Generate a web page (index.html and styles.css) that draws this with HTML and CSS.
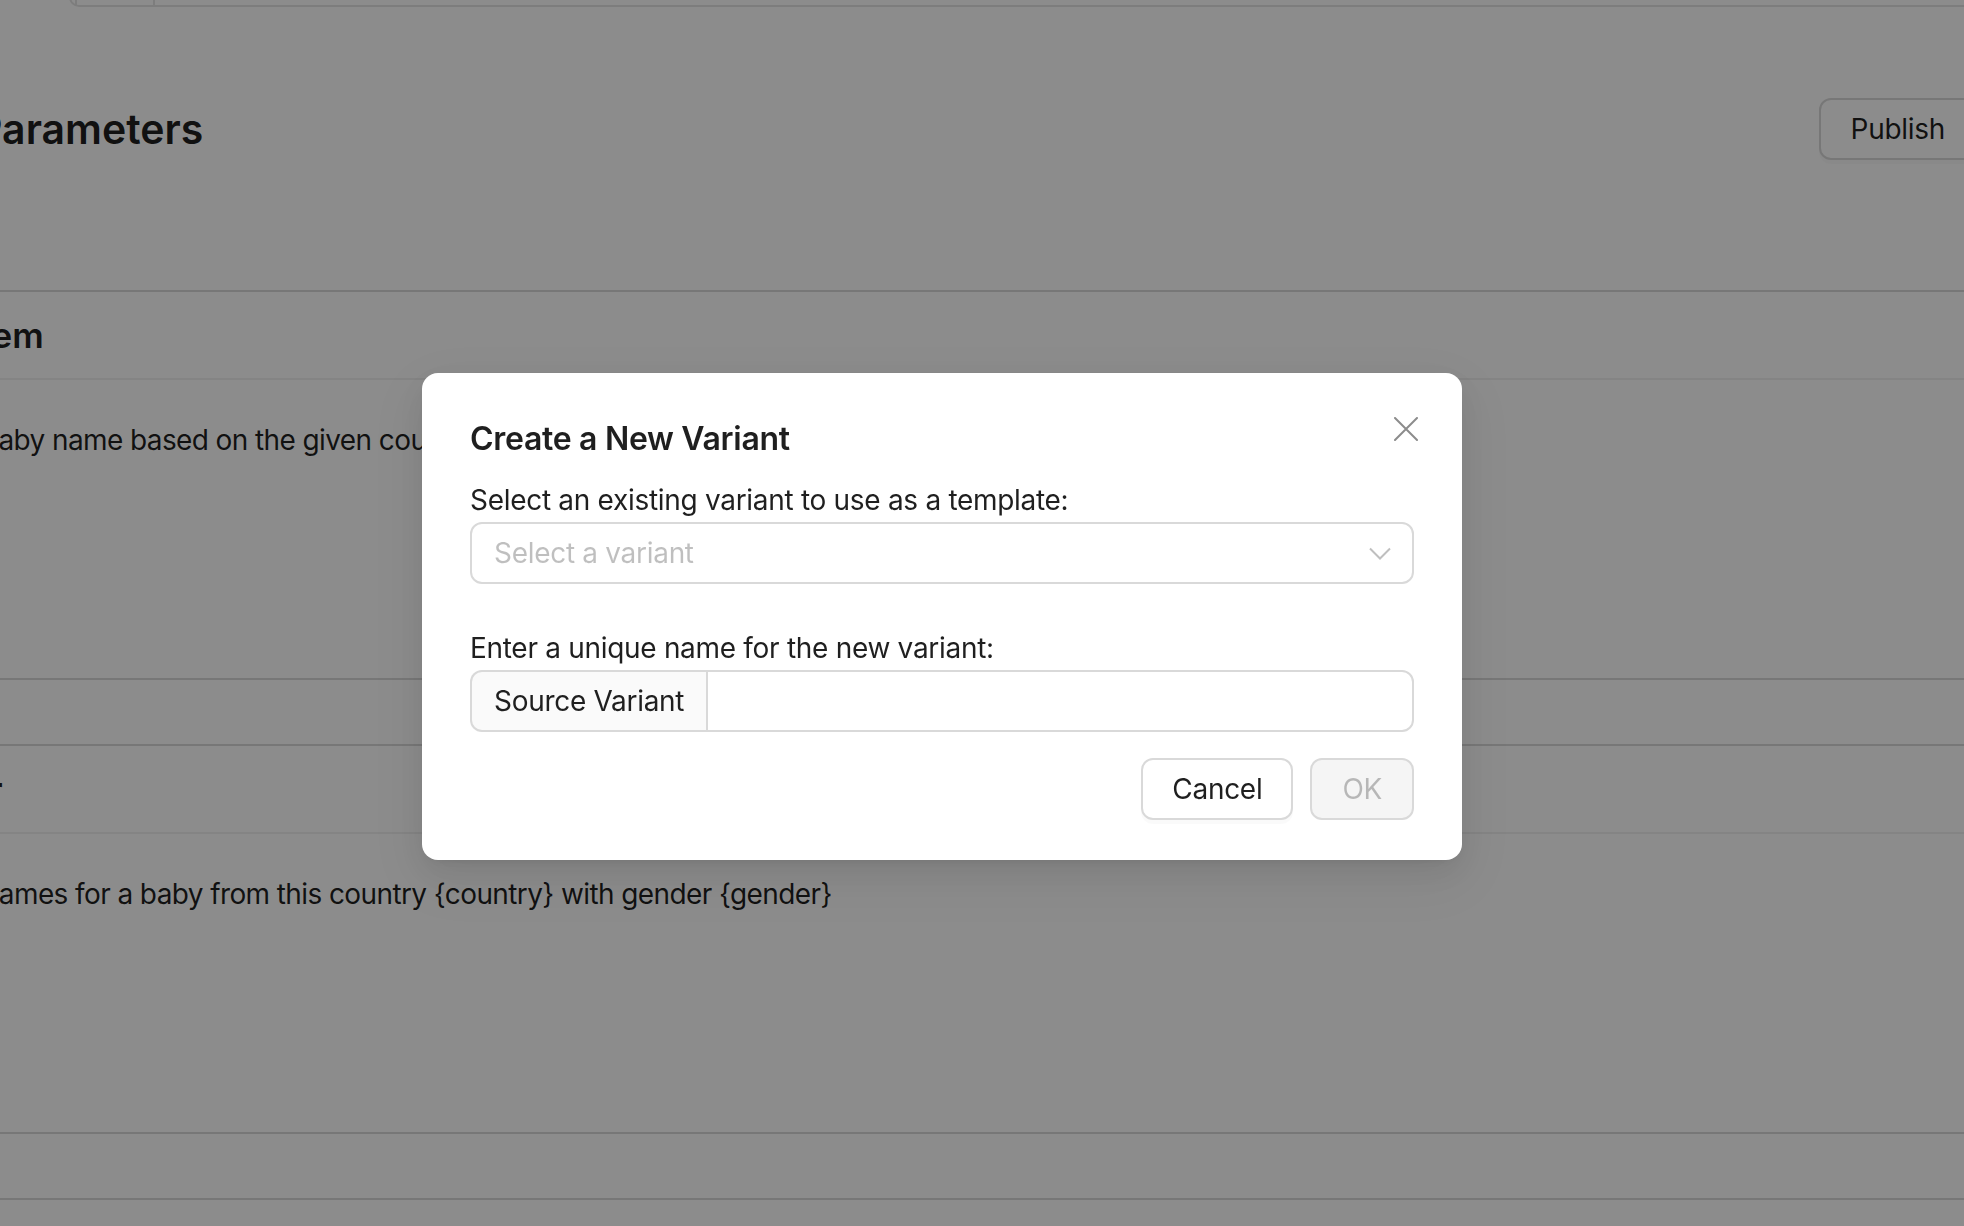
FILE: index.html
```html
<!DOCTYPE html>
<html lang="en">
<head>
<meta charset="utf-8">
<title>Parameters</title>
<link rel="stylesheet" href="styles.css">
</head>
<body>
<div class="page">
  <div class="topbar"><div class="topbar-seg"></div></div>

  <div class="page-head">
    <h2 class="page-title">Parameters</h2>
    <button class="btn btn-publish" type="button">Publish</button>
  </div>

  <div class="cards">
    <section class="card">
      <div class="card-head"><span class="card-title">System</span></div>
      <div class="card-body"><p class="prompt prompt-system">Suggest a baby name based on the given country and gender.</p></div>
    </section>
    <section class="card">
      <div class="card-head"><span class="card-title card-title-user">User</span></div>
      <div class="card-body"><p class="prompt prompt-user">Suggest 5 names for a baby from this country {country} with gender {gender}</p></div>
    </section>
    <section class="card">
      <div class="card-head"></div>
      <div class="card-body"></div>
    </section>
  </div>
</div>

<div class="mask"></div>

<div class="modal" role="dialog" aria-labelledby="modal-title">
  <button class="modal-close" type="button" aria-label="Close">
    <svg width="24" height="24" viewBox="0 0 24 24"><path d="M1 1 L23 23 M23 1 L1 23" stroke="#8c8c8c" stroke-width="2" fill="none" stroke-linecap="round"/></svg>
  </button>
  <div class="modal-title" id="modal-title">Create a New Variant</div>
  <div class="modal-body">
    <div class="field-label">Select an existing variant to use as a template:</div>
    <div class="select">
      <span class="select-placeholder">Select a variant</span>
      <svg class="select-arrow" width="22" height="13" viewBox="0 0 22 13"><path d="M1 1.5 L11 11.5 L21 1.5" stroke="#bfbfbf" stroke-width="2" fill="none"/></svg>
    </div>
    <div class="field-label field-label-second">Enter a unique name for the new variant:</div>
    <div class="input-group">
      <span class="addon">Source Variant</span>
      <input class="input" type="text" aria-label="Variant name">
    </div>
  </div>
  <div class="modal-footer">
    <button class="btn btn-cancel" type="button">Cancel</button>
    <button class="btn btn-ok" type="button" disabled>OK</button>
  </div>
</div>
</body>
</html>
```

FILE: styles.css
```css
* { box-sizing: border-box; }

html, body {
  margin: 0;
  height: 100%;
}

body {
  font-family: Inter, "Noto Sans", "Liberation Sans", sans-serif;
  font-size: 28px;
  line-height: 44px;
  color: rgba(0, 0, 0, 0.88);
  background: #ffffff;
  overflow: hidden;
  letter-spacing: -0.3px;
}

/* ---------- background page ---------- */
.page {
  margin-right: -13px;
}

.topbar {
  height: 40px;
  margin: -33px 0 0 69px;
  padding-left: 4px;
  border: 2px solid #e4e4e4;
  border-top: 0;
  border-right: 0;
  border-bottom-left-radius: 10px;
}

.topbar-seg {
  width: 80px;
  height: 100%;
  border-left: 2px solid #e4e4e4;
  border-right: 2px solid #e4e4e4;
}

.page-head {
  display: flex;
  justify-content: space-between;
  align-items: center;
  height: 62px;
  margin-top: 91px;
}

.page-title {
  margin: 0;
  font-size: 41px;
  font-weight: 600;
  line-height: 62px;
  letter-spacing: 0;
  text-indent: -24px;
}

.btn {
  height: 62px;
  padding: 0 30px;
  border: 2px solid #d9d9d9;
  border-radius: 12px;
  background: #ffffff;
  font-family: inherit;
  font-size: 28px;
  letter-spacing: -0.3px;
  color: rgba(0, 0, 0, 0.88);
  box-shadow: 0 4px 0 rgba(0, 0, 0, 0.02);
}

.cards {
  margin-top: 130px;
}

.card {
  margin: 0 -60px 64px -48px;
  border: 2px solid #d9d9d9;
  border-radius: 16px;
}

.card-head {
  display: flex;
  align-items: center;
  height: 88px;
  padding: 0 48px;
  border-bottom: 2px solid #f0f0f0;
  font-size: 35px;
  font-weight: 600;
  letter-spacing: 0;
}

.card-title {
  display: block;
  text-indent: -85px;
}

.card-title-user {
  text-indent: -79px;
}

.card-body {
  height: 298px;
  padding: 38px 48px;
}

.prompt {
  margin: 0;
  white-space: nowrap;
  letter-spacing: -0.6px;
}

.prompt-system { text-indent: -155px; }
.prompt-user { text-indent: -155px; }

/* ---------- modal ---------- */
.mask {
  position: fixed;
  inset: 0;
  background: rgba(0, 0, 0, 0.45);
}

.modal {
  position: fixed;
  left: 422px;
  top: 373px;
  width: 1040px;
  padding: 44px 48px 40px;
  background: #ffffff;
  border-radius: 16px;
  box-shadow: 0 12px 32px 0 rgba(0, 0, 0, 0.08),
              0 6px 12px -8px rgba(0, 0, 0, 0.12),
              0 18px 56px 16px rgba(0, 0, 0, 0.05);
}

.modal-close {
  position: absolute;
  top: 34px;
  right: 34px;
  width: 44px;
  height: 44px;
  padding: 0;
  border: 0;
  background: transparent;
  display: flex;
  align-items: center;
  justify-content: center;
}

.modal-title {
  font-size: 32px;
  font-weight: 600;
  line-height: 44px;
  margin-bottom: 17px;
}

.field-label {
  height: 44px;
}

.field-label-second {
  margin-top: 42px;
}

.select {
  display: flex;
  align-items: center;
  justify-content: space-between;
  height: 62px;
  padding: 0 21px 0 22px;
  border: 2px solid #d9d9d9;
  border-radius: 12px;
}

.select-placeholder {
  color: rgba(0, 0, 0, 0.25);
}

.input-group {
  display: flex;
  height: 62px;
}

.addon {
  display: flex;
  align-items: center;
  padding: 0 22px;
  background: #fafafa;
  border: 2px solid #d9d9d9;
  border-right: 0;
  border-radius: 12px 0 0 12px;
  white-space: nowrap;
}

.input {
  flex: 1;
  min-width: 0;
  height: 62px;
  border: 2px solid #d9d9d9;
  border-radius: 0 12px 12px 0;
  font: inherit;
  padding: 0 22px;
  outline: none;
}

.modal-footer {
  display: flex;
  justify-content: flex-end;
  gap: 17px;
  margin-top: 26px;
}

.btn-cancel {
  padding: 0 29px;
}

.btn-ok {
  background: #f5f5f5;
  color: rgba(0, 0, 0, 0.25);
  box-shadow: none;
}
```
